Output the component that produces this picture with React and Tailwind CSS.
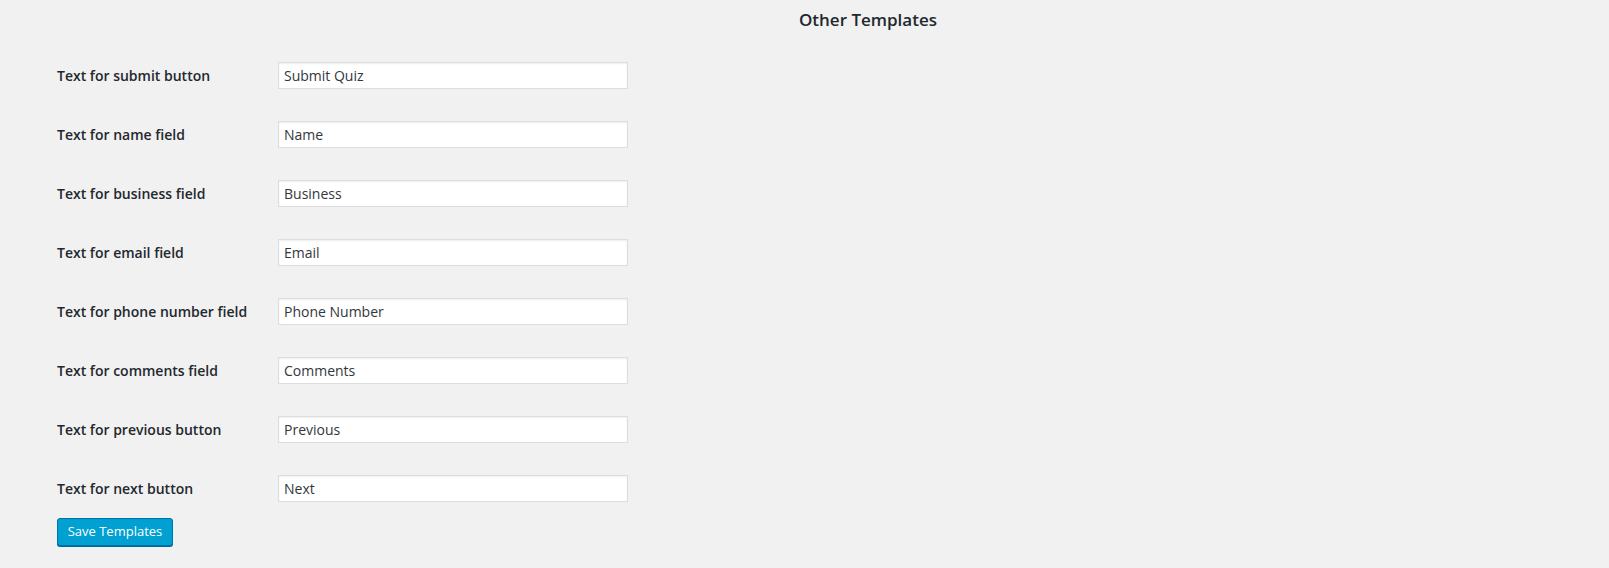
import { useState } from 'react'

const rows = [
  ['submit', 'Text for submit button', 'Submit Quiz'],
  ['name', 'Text for name field', 'Name'],
  ['business', 'Text for business field', 'Business'],
  ['email', 'Text for email field', 'Email'],
  ['phone', 'Text for phone number field', 'Phone Number'],
  ['comments', 'Text for comments field', 'Comments'],
  ['previous', 'Text for previous button', 'Previous'],
  ['next', 'Text for next button', 'Next'],
]

export default function App() {
  const [f, setF] = useState(Object.fromEntries(rows.map(([k, , v]) => [k, v])))
  const set = (k) => (e) => setF({ ...f, [k]: e.target.value })

  return (
    <div className="min-h-[568px] bg-[#f1f1f1] text-[#23282d] font-['Open_Sans',sans-serif]">
      <h3 className="ml-[127px] h-[46px] pt-[8px] text-center text-[17px] font-semibold leading-[24px]">Other Templates</h3>
      <div className="pl-[57px]">
        {rows.map(([k, label]) => (
          <div key={k} className="flex h-[59px] items-center">
            <label className="w-[221px] text-[14px] font-semibold leading-[18px]">{label}</label>
            <input
              value={f[k]}
              onChange={set(k)}
              className="h-[27px] w-[350px] border border-[#ddd] bg-white px-[5px] text-[14px] text-[#32373c] shadow-[inset_0_1px_2px_rgba(0,0,0,0.07)] outline-none"
            />
          </div>
        ))}
        <button className="h-[28px] w-[116px] rounded-[3px] border border-[#0073aa] bg-[#00a0d2] text-[13px] text-white shadow-[0_1px_0_#006799]">
          Save Templates
        </button>
      </div>
    </div>
  )
}
